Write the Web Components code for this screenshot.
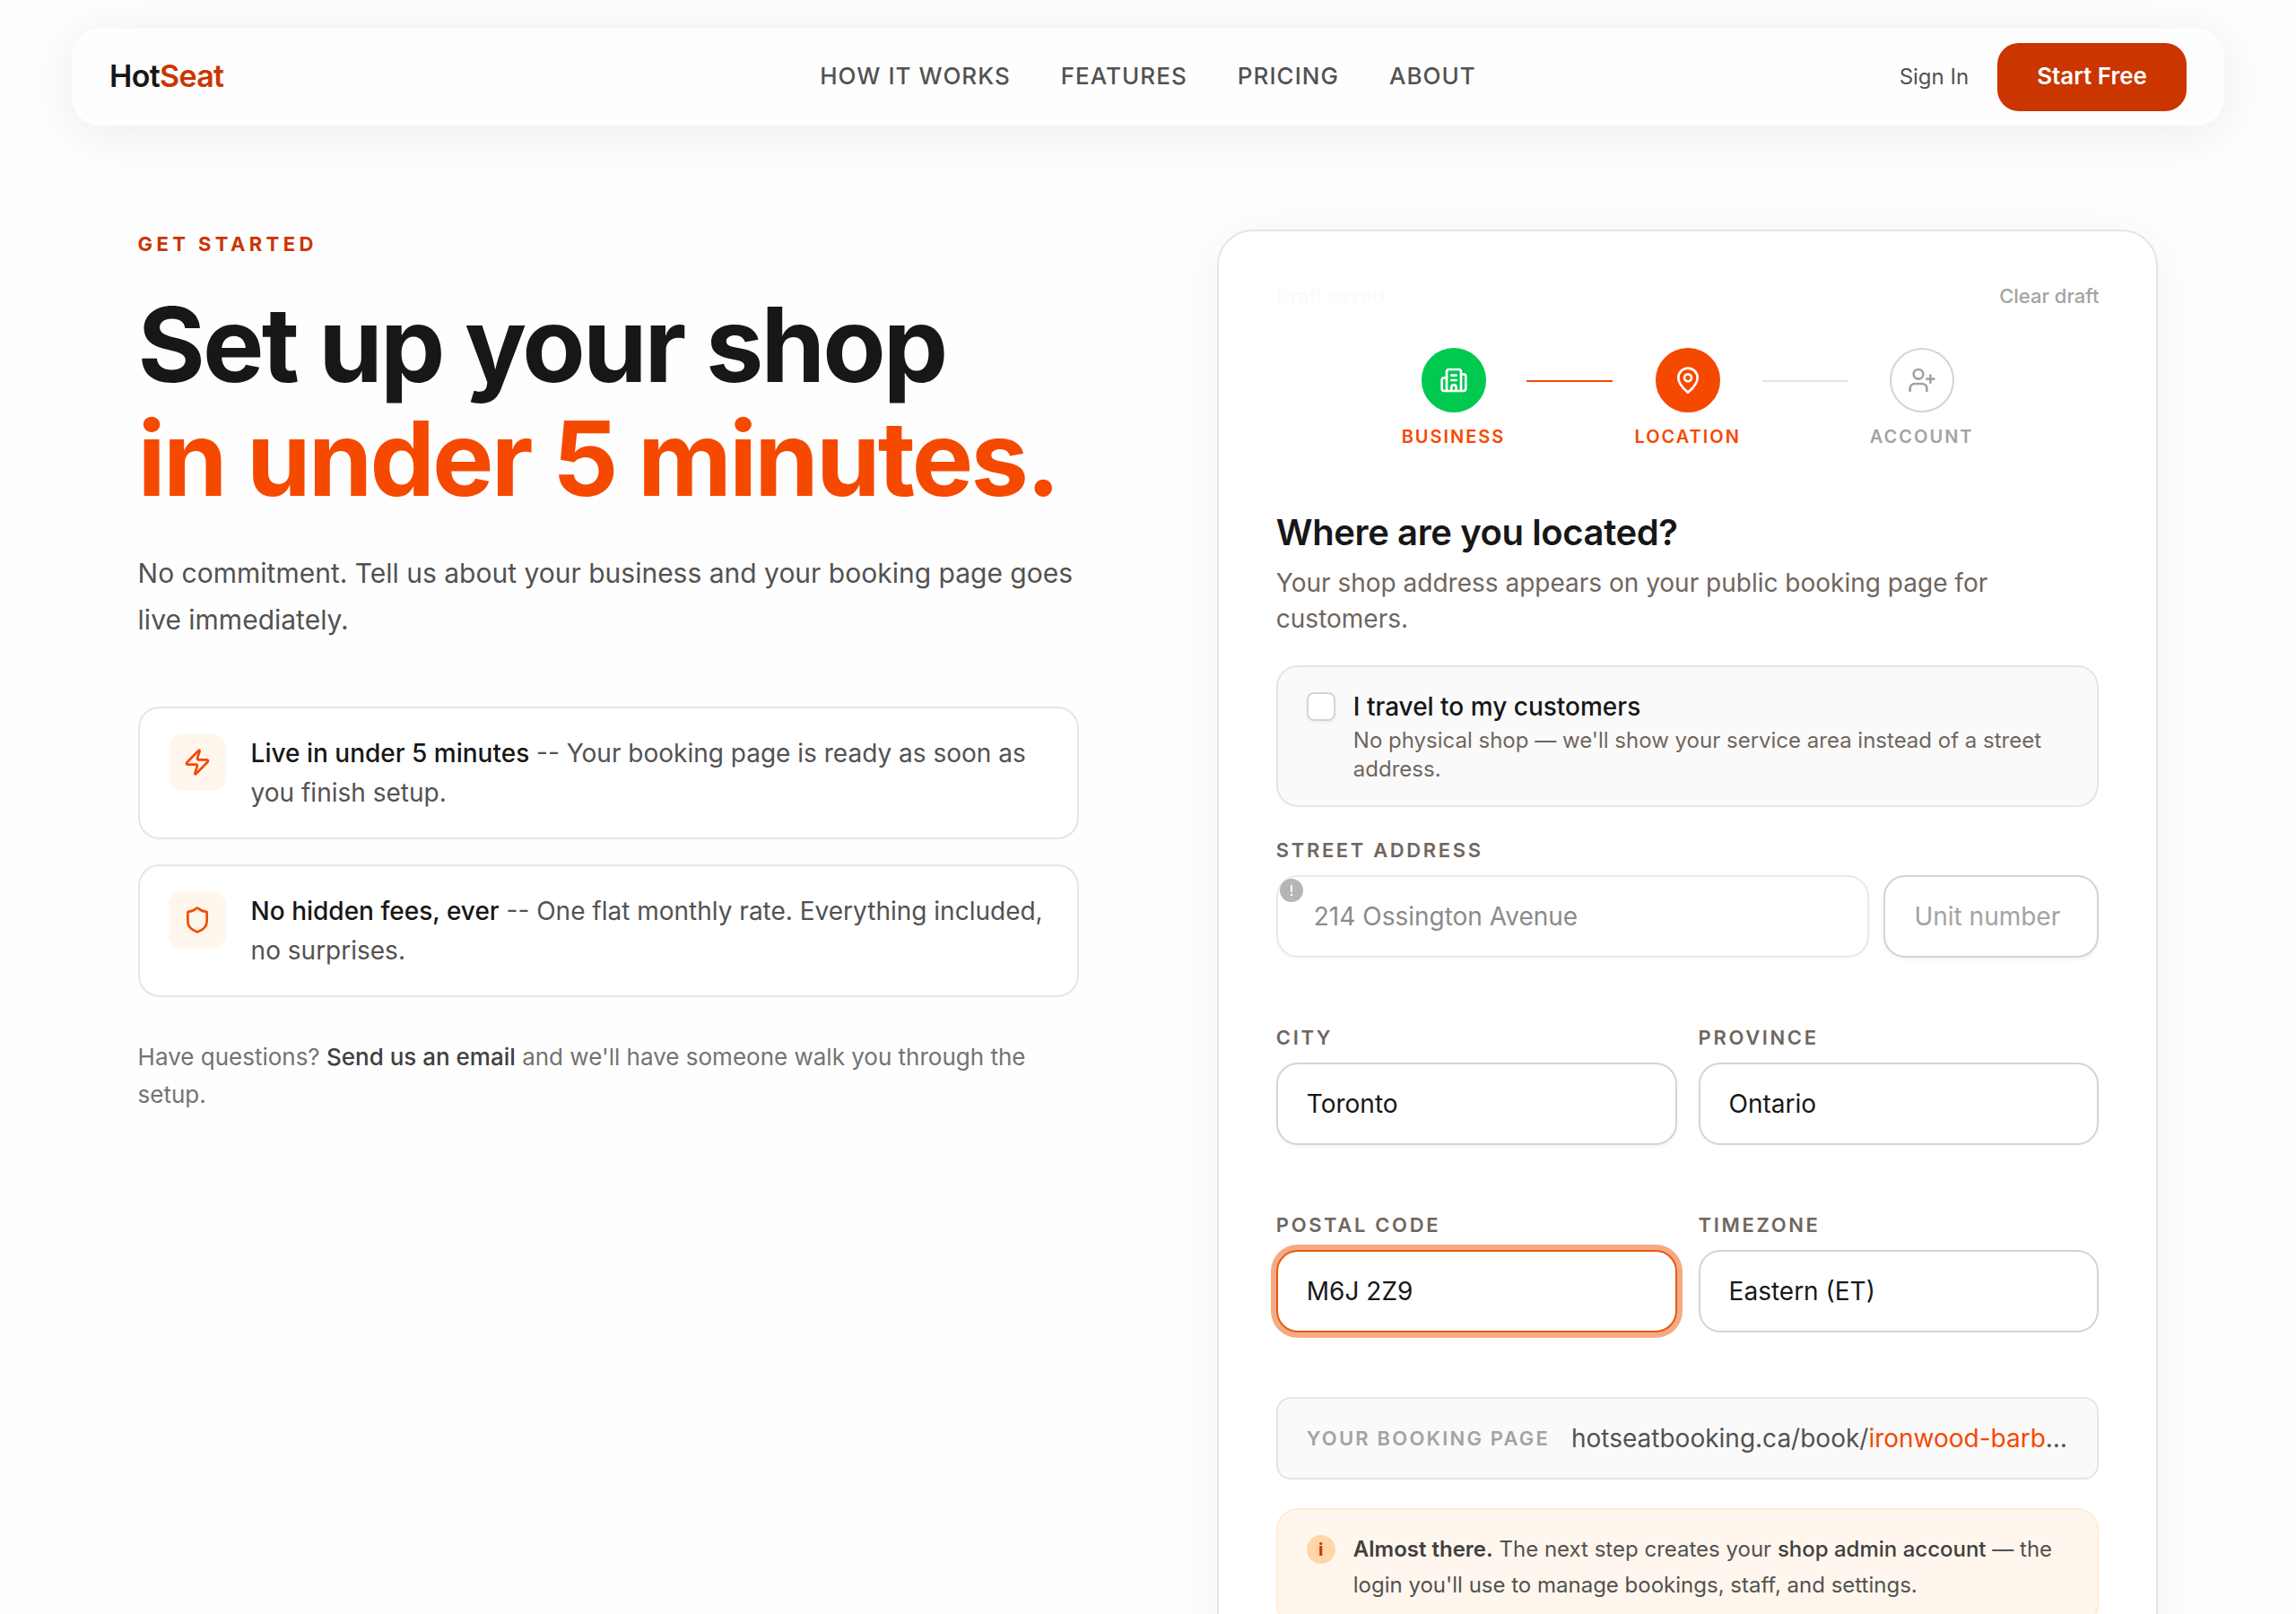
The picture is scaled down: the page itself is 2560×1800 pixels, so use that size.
<!DOCTYPE html>
<html lang="en">
<head>
<meta charset="utf-8">
<title>HotSeat - Get started</title>
<style>
html {
  background: #fefefe;
}

body {
  margin: 0;
  font-family: Inter, "Liberation Sans", sans-serif;
  color: #171717;
  --ink: #171717;
  --body: #525252;
  --muted: #737373;
  --faint: #a3a3a3;
  --warm: #6f665e;
  --line: #e5e5e5;
  --line-strong: #d4d4d4;
  --orange: #f54900;
  --rust: #ca3500;
  --green: #00c950;
}
</style>
</head>
<body>
<site-nav></site-nav>

<signup-layout>
  <signup-intro slot="intro">
    <feature-card icon="zap"><strong>Live in under 5 minutes</strong> -- Your booking page is ready as soon as you finish setup.</feature-card>
    <feature-card icon="shield"><strong>No hidden fees, ever</strong> -- One flat monthly rate. Everything included, no surprises.</feature-card>
  </signup-intro>
  <signup-form slot="form"></signup-form>
</signup-layout>

<script>
const ICONS = {
  'zap': '<path d="M4 14a1 1 0 0 1-.78-1.63l9.9-10.2a.5.5 0 0 1 .86.46l-1.92 6.02A1 1 0 0 0 13 10h7a1 1 0 0 1 .78 1.63l-9.9 10.2a.5.5 0 0 1-.86-.46l1.92-6.02A1 1 0 0 0 11 14z"/>',
  'shield': '<path d="M20 13c0 5-3.5 7.5-7.66 8.95a1 1 0 0 1-.67-.01C7.5 20.5 4 18 4 13V6a1 1 0 0 1 1-1c2 0 4.5-1.2 6.24-2.72a1.17 1.17 0 0 1 1.52 0C14.51 3.81 17 5 19 5a1 1 0 0 1 1 1z"/>',
  'building': '<path d="M10 12h4"/><path d="M10 8h4"/><path d="M14 21v-3a2 2 0 0 0-4 0v3"/><path d="M6 10H4a2 2 0 0 0-2 2v7a2 2 0 0 0 2 2h16a2 2 0 0 0 2-2V9a2 2 0 0 0-2-2h-2"/><path d="M6 21V5a2 2 0 0 1 2-2h8a2 2 0 0 1 2 2v16"/>',
  'map-pin': '<path d="M20 10c0 4.993-5.539 10.193-7.399 11.799a1 1 0 0 1-1.202 0C9.539 20.193 4 14.993 4 10a8 8 0 0 1 16 0"/><circle cx="12" cy="10" r="3"/>',
  'user-plus': '<path d="M16 21v-2a4 4 0 0 0-4-4H6a4 4 0 0 0-4 4v2"/><circle cx="9" cy="7" r="4"/><path d="M19 8v6"/><path d="M22 11h-6"/>',
};

class HsIcon extends HTMLElement {
  connectedCallback() {
    if (this.shadowRoot) {
      return;
    }

    this.attachShadow({ mode: "open" });
    this.shadowRoot.innerHTML = `
<style>
:host {
  display: block;
  width: 32px;
  height: 32px;
}

svg {
  display: block;
  width: 100%;
  height: 100%;
}
</style>
<svg viewBox="0 0 24 24" fill="none" stroke="currentColor" stroke-width="2" stroke-linecap="round" stroke-linejoin="round" aria-hidden="true">${ICONS[this.getAttribute("name")]}</svg>`;
  }
}
window.customElements.define('hs-icon', HsIcon);


const navTemplate = document.createElement('template');
navTemplate.innerHTML = `
<style>
:host {
  display: block;
  padding: 32px 80px 0;
}

header {
  display: grid;
  grid-template-columns: 1fr auto 1fr;
  align-items: center;
  padding: 14px 40px;
  border: 2px solid #fff;
  border-radius: 32px;
  background: #fefefe;
  box-shadow: 0 8px 60px rgba(0, 0, 0, 0.08);
}

a {
  color: var(--body);
  text-decoration: none;
}

.logo {
  padding-bottom: 2px;
  font-size: 34px;
  line-height: 40px;
  font-weight: 600;
  letter-spacing: -0.02em;
  color: var(--ink);
}

.logo span {
  color: var(--rust);
}

nav {
  display: flex;
  gap: 56px;
  padding-bottom: 2px;
  font-size: 26px;
  line-height: 40px;
  font-weight: 500;
  letter-spacing: 0.04em;
  text-transform: uppercase;
}

.actions {
  display: flex;
  align-items: center;
  justify-content: flex-end;
  gap: 32px;
  font-size: 24px;
}

.actions a {
  padding-bottom: 2px;
}

button {
  font: 600 26px/40px Inter, "Liberation Sans", sans-serif;
  padding: 17px 44px 19px;
  border: 0;
  border-radius: 24px;
  color: #fff;
  background: var(--rust);
}
</style>
<header>
  <a class="logo" href="#">Hot<span>Seat</span></a>
  <nav>
    <a href="#how">How it works</a>
    <a href="#features">Features</a>
    <a href="#pricing">Pricing</a>
    <a href="#about">About</a>
  </nav>
  <div class="actions">
    <a href="#signin">Sign In</a>
    <button type="button">Start Free</button>
  </div>
</header>
`;
class SiteNav extends HTMLElement {
  constructor() {
    super();

    this.attachShadow({ mode: "open" });
    this.shadowRoot.appendChild(navTemplate.content.cloneNode(true));
  }
}
window.customElements.define('site-nav', SiteNav);


const layoutTemplate = document.createElement('template');
layoutTemplate.innerHTML = `
<style>
:host {
  display: grid;
  grid-template-columns: minmax(0, 1fr) minmax(0, 1fr);
  gap: 6vw;
  align-items: start;
  padding: 116px 6vw;
}
</style>
<slot name="intro"></slot>
<slot name="form"></slot>
`;
class SignupLayout extends HTMLElement {
  constructor() {
    super();

    this.attachShadow({ mode: "open" });
    this.shadowRoot.appendChild(layoutTemplate.content.cloneNode(true));
  }
}
window.customElements.define('signup-layout', SignupLayout);


const introTemplate = document.createElement('template');
introTemplate.innerHTML = `
<style>
:host {
  display: block;
}

p, h1 {
  margin: 0;
}

.eyebrow {
  font-size: 22px;
  line-height: 33px;
  font-weight: 700;
  letter-spacing: 0.2em;
  text-transform: uppercase;
  color: var(--rust);
}

h1 {
  margin-top: 32px;
  font-size: 115px;
  line-height: 127px;
  font-weight: 700;
  letter-spacing: -0.025em;
}

h1 span {
  display: block;
  color: var(--orange);
}

.lead {
  margin-top: 38px;
  font-size: 30px;
  line-height: 52px;
  color: var(--body);
}

.features {
  display: flex;
  flex-direction: column;
  gap: 28px;
  margin-top: 71px;
}

.help {
  margin-top: 46px;
  font-size: 26px;
  line-height: 42px;
  color: var(--muted);
}

.help a {
  font-weight: 500;
  color: #404040;
  text-decoration: none;
}
</style>
<p class="eyebrow">Get started</p>
<h1>Set up your shop <span>in under 5 minutes.</span></h1>
<p class="lead">No commitment. Tell us about your business and your booking page goes live immediately.</p>
<div class="features"><slot></slot></div>
<p class="help">Have questions? <a href="#email">Send us an email</a> and we'll have someone walk you through the setup.</p>
`;
class SignupIntro extends HTMLElement {
  constructor() {
    super();

    this.attachShadow({ mode: "open" });
    this.shadowRoot.appendChild(introTemplate.content.cloneNode(true));
  }
}
window.customElements.define('signup-intro', SignupIntro);


class FeatureCard extends HTMLElement {
  connectedCallback() {
    if (this.shadowRoot) {
      return;
    }

    this.attachShadow({ mode: "open" });
    this.shadowRoot.innerHTML = `
<style>
:host {
  display: flex;
  gap: 28px;
  padding: 28px 32px;
  border: 2px solid var(--line);
  border-radius: 24px;
  background: #fff;
}

.badge {
  display: flex;
  flex: none;
  align-items: center;
  justify-content: center;
  width: 64px;
  height: 64px;
  border-radius: 16px;
  color: var(--orange);
  background: #fff7ed;
}

p {
  margin: 0;
  font-size: 28px;
  line-height: 44px;
  color: var(--body);
}

::slotted(strong) {
  font-weight: 500;
  color: var(--ink);
}
</style>
<div class="badge"><hs-icon name="${this.getAttribute("icon")}"></hs-icon></div>
<p><slot></slot></p>`;
  }
}
window.customElements.define('feature-card', FeatureCard);


class StepItem extends HTMLElement {
  connectedCallback() {
    if (this.shadowRoot) {
      return;
    }

    this.attachShadow({ mode: "open" });
    this.shadowRoot.innerHTML = `
<style>
:host {
  display: flex;
  flex-direction: column;
  align-items: center;
  gap: 12px;
  font-size: 20px;
  line-height: 30px;
  font-weight: 600;
  letter-spacing: 0.1em;
  text-transform: uppercase;
  color: var(--faint);
}

:host([state]) {
  color: var(--orange);
}

.dot {
  display: flex;
  align-items: center;
  justify-content: center;
  box-sizing: border-box;
  width: 72px;
  height: 72px;
  border: 2px solid var(--line-strong);
  border-radius: 50%;
  background: #fff;
}

:host([state]) .dot {
  border-color: var(--orange);
  color: #fff;
  background: var(--orange);
}

:host([state="done"]) .dot {
  border-color: var(--green);
  background: var(--green);
}
</style>
<div class="dot"><hs-icon name="${this.getAttribute("icon")}"></hs-icon></div>
<div><slot></slot></div>`;
  }
}
window.customElements.define('step-item', StepItem);


// A labelled text box, or a drop-down when "options" is set.
class FormField extends HTMLElement {
  connectedCallback() {
    if (this.shadowRoot) {
      return;
    }

    this.attachShadow({ mode: "open" });
    this.shadowRoot.innerHTML = `
<style>
:host {
  display: flex;
  flex-direction: column;
  justify-content: flex-end;
  gap: 12px;
  position: relative;
  min-width: 0;
}

label {
  font-size: 22px;
  line-height: 32px;
  font-weight: 600;
  letter-spacing: 0.12em;
  text-transform: uppercase;
  color: var(--warm);
}

input, select {
  display: block;
  box-sizing: border-box;
  width: 100%;
  height: 92px;
  margin: 0;
  padding: 0 32px;
  border: 2px solid var(--line-strong);
  border-radius: 24px;
  outline: 0;
  appearance: none;
  font: 400 28px/40px Inter, "Liberation Sans", sans-serif;
  color: var(--ink);
  background: #fff;
  opacity: 1;
}

input {
  box-shadow: 0 2px 4px rgba(0, 0, 0, 0.05);
}

input::placeholder {
  color: var(--faint);
}

input:disabled {
  padding-left: 40px;
  border-color: #e9e9e9;
  color: #8b8b8b;
  box-shadow: 0 2px 4px rgba(0, 0, 0, 0.02);
}

:host([active]) input {
  border-color: #ea580c;
  box-shadow: 0 0 0 6px rgba(234, 88, 12, 0.5);
}

.alert {
  position: absolute;
  left: 4px;
  bottom: 62px;
  width: 26px;
  height: 26px;
}
</style>`;

    const control = this._control();
    control.id = "control";

    const text = this.getAttribute("label");
    if (text) {
      const label = document.createElement("label");
      label.htmlFor = control.id;
      label.textContent = text;
      this.shadowRoot.appendChild(label);
    } else {
      control.setAttribute("aria-label", this.getAttribute("placeholder"));
    }
    this.shadowRoot.appendChild(control);

    if (this.hasAttribute("alert")) {
      this.shadowRoot.appendChild(this._alert());
    }
  }

  _control() {
    if (this.hasAttribute("options")) {
      const select = document.createElement("select");
      for (let name of this.getAttribute("options").split("|")) {
        select.add(new Option(name));
      }
      return select;
    }

    const input = document.createElement("input");
    input.type = "text";
    input.value = this.getAttribute("value") || "";
    input.placeholder = this.getAttribute("placeholder") || "";
    input.disabled = this.hasAttribute("disabled");
    return input;
  }

  _alert() {
    const wrapper = document.createElement("template");
    wrapper.innerHTML = `
<svg class="alert" viewBox="0 0 26 26" aria-hidden="true">
  <circle cx="13" cy="13" r="13" fill="#b5b5b5"/>
  <path d="M13 7v8" stroke="#fff" stroke-width="2"/>
  <circle cx="13" cy="18" r="1.2" fill="#fff"/>
</svg>`;
    return wrapper.content;
  }
}
window.customElements.define('form-field', FormField);


const formTemplate = document.createElement('template');
formTemplate.innerHTML = `
<style>
:host {
  display: block;
  padding: 56px 64px;
  border: 2px solid var(--line);
  border-radius: 40px;
  background: #fff;
  box-shadow: 0 8px 60px rgba(0, 0, 0, 0.05);
}

h2, p {
  margin: 0;
}

.draft {
  display: flex;
  justify-content: space-between;
  font-size: 22px;
  line-height: 33px;
  font-weight: 500;
  color: #fafafa;
}

.draft button {
  padding: 0;
  border: 0;
  font: inherit;
  color: var(--faint);
  background: none;
}

.steps {
  display: flex;
  justify-content: center;
  gap: 24px;
  margin-top: 41px;
}

.bar {
  width: 96px;
  height: 2px;
  margin-top: 36px;
  background: var(--line);
}

.bar.done {
  background: var(--orange);
}

h2 {
  margin-top: 68px;
  font-size: 40px;
  line-height: 48px;
  font-weight: 600;
  letter-spacing: -0.01em;
}

.sub {
  margin-top: 12px;
  font-size: 28px;
  line-height: 40px;
  color: var(--warm);
}

.travel {
  display: flex;
  gap: 20px;
  margin-top: 32px;
  padding: 26px 32px 24px;
  border: 2px solid var(--line);
  border-radius: 24px;
  background: #fafafa;
}

.travel input {
  flex: none;
  box-sizing: border-box;
  width: 32px;
  height: 32px;
  margin: 2px 0 0;
  appearance: none;
  border: 2px solid var(--line-strong);
  border-radius: 8px;
  background: #fff;
  box-shadow: 0 2px 4px rgba(0, 0, 0, 0.05);
}

.travel b {
  display: block;
  font-size: 28px;
  line-height: 36px;
  font-weight: 500;
}

.travel small {
  display: block;
  margin-top: 4px;
  font-size: 24px;
  line-height: 32px;
  color: var(--warm);
}

.street {
  display: grid;
  grid-template-columns: minmax(0, 1fr) 240px;
  gap: 16px;
  margin-top: 32px;
}

.pair {
  display: grid;
  grid-template-columns: minmax(0, 1fr) minmax(0, 1fr);
  gap: 24px;
  margin-top: 73px;
}

.page {
  display: flex;
  align-items: center;
  gap: 24px;
  margin-top: 72px;
  padding: 24px 32px;
  border: 2px solid var(--line);
  border-radius: 16px;
  font-size: 28px;
  line-height: 40px;
  color: var(--body);
  background: #fafafa;
}

.page span {
  flex: none;
  font-size: 22px;
  font-weight: 600;
  letter-spacing: 0.1em;
  text-transform: uppercase;
  color: var(--faint);
}

.page em {
  font-style: normal;
  color: var(--orange);
}

.notice {
  display: flex;
  gap: 20px;
  margin-top: 32px;
  padding: 24px 32px;
  border: 2px solid #ffedd4;
  border-radius: 24px;
  font-size: 24px;
  line-height: 40px;
  color: var(--body);
  background: #fff7ed;
}

.notice i {
  flex: none;
  width: 32px;
  height: 32px;
  margin-top: 4px;
  border-radius: 50%;
  font-size: 20px;
  line-height: 32px;
  font-style: normal;
  font-weight: 700;
  text-align: center;
  color: var(--rust);
  background: #ffd6a7;
}

.notice strong {
  font-weight: 600;
  color: #404040;
}

.notice b {
  font-weight: 500;
  color: #404040;
}
</style>
<div class="draft"><span>Draft saved</span><button type="button">Clear draft</button></div>
<div class="steps">
  <step-item icon="building" state="done">Business</step-item>
  <div class="bar done"></div>
  <step-item icon="map-pin" state="current">Location</step-item>
  <div class="bar"></div>
  <step-item icon="user-plus">Account</step-item>
</div>
<h2>Where are you located?</h2>
<p class="sub">Your shop address appears on your public booking page for customers.</p>
<label class="travel">
  <input type="checkbox">
  <span>
    <b>I travel to my customers</b>
    <small>No physical shop — we'll show your service area instead of a street address.</small>
  </span>
</label>
<div class="street">
  <form-field label="Street address" value="214 Ossington Avenue" disabled alert></form-field>
  <form-field placeholder="Unit number"></form-field>
</div>
<div class="pair">
  <form-field label="City" value="Toronto"></form-field>
  <form-field label="Province" options="Ontario|Quebec|British Columbia|Alberta"></form-field>
</div>
<div class="pair">
  <form-field label="Postal code" value="M6J 2Z9" active></form-field>
  <form-field label="Timezone" options="Eastern (ET)|Central (CT)|Pacific (PT)"></form-field>
</div>
<div class="page">
  <span>Your booking page</span>
  <p>hotseatbooking.ca/book/<em>ironwood-barb</em>…</p>
</div>
<div class="notice">
  <i>i</i>
  <p><strong>Almost there.</strong> The next step creates your <b>shop admin account</b> — the login you'll use to manage bookings, staff, and settings.</p>
</div>
`;
class SignupForm extends HTMLElement {
  constructor() {
    super();

    this.attachShadow({ mode: "open" });
    this.shadowRoot.appendChild(formTemplate.content.cloneNode(true));
  }
}
window.customElements.define('signup-form', SignupForm);
</script>
</body>
</html>
